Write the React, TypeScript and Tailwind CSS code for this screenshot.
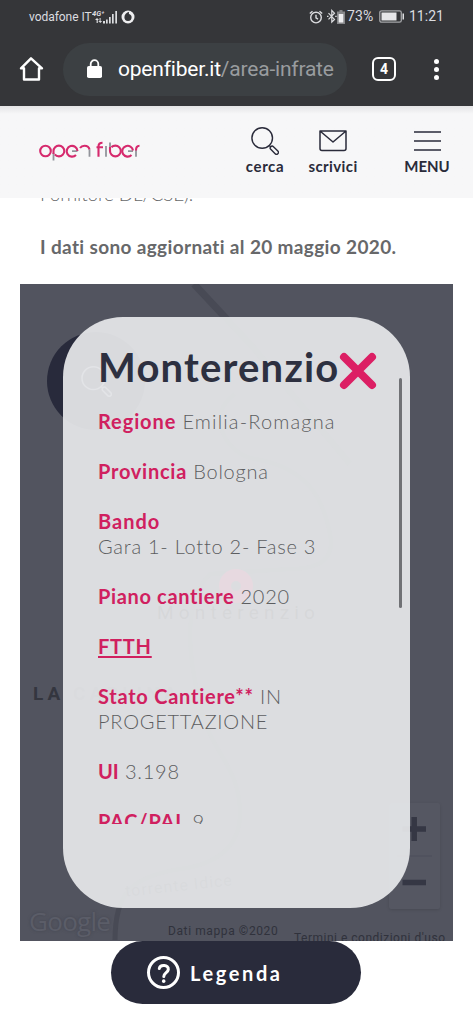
import type { ReactNode } from "react";
import { clsx } from "clsx";

const StatusBar = () => (
  <div className="flex h-[33px] shrink-0 items-center justify-between pl-[29px] pr-[29px] font-['Roboto',sans-serif] text-[#dcdde0]">
    <div className="flex items-center">
      <span className="w-[62px] whitespace-nowrap text-[12px] tracking-[-0.05px]">vodafone IT</span>
      <svg width="27" height="16" viewBox="0 0 27 16" className="ml-px" fill="currentColor">
        <text x="0" y="7" fontSize="7.500" fontWeight="700" fontStyle="italic">4G⁺</text>
        <path d="M5 9l2 2H5.800v3H4.600v-3H3zM8.300 14l-2-2h1.300V9h1v3h1.500z" />
        <path d="M11 12h2v2.500h-2zM14 10.500h1.700v4H14zM17 8h1.700v6.500H17zM20 5h1.700v9.500H20zM23.300 2H25v12.500h-1.700z" />
      </svg>
      <svg width="14" height="14" viewBox="0 0 14 14" className="ml-[2px]">
        <circle cx="7" cy="7" r="6.500" fill="#eeeef0" />
        <path d="M8.200 1.800C5.500 2.300 3.400 4.700 3.400 7.300a3.600 3.600 0 0 0 7.200 0c0-1.700-1-2.900-2.600-3.300-.3-.9-.2-1.600.2-2.200z" fill="#353639" />
      </svg>
    </div>
    <div className="flex items-center">
      <svg width="14" height="14" viewBox="0 0 14 14" fill="none" stroke="currentColor" strokeWidth="1.400" className="-ml-px">
        <circle cx="7" cy="7.600" r="5.300" />
        <path d="M7 4.800v3l2 1.300M.8 3.600l2.700-2.400M13.200 3.600l-2.700-2.400" />
      </svg>
      <svg width="10" height="15" viewBox="0 0 10 15" fill="none" stroke="currentColor" strokeWidth="1.200" className="ml-[4px]">
        <path d="M1.500 4.200l6 6.200L4.800 13V1.500l2.700 2.700-6 6.200" />
        <path d="M0 7.300h1.500M8.200 7.300h1.500" />
      </svg>
      <svg width="8" height="14" viewBox="0 0 8 14">
        <path d="M2.500 0h3v1.500H8V14H0V1.500h2.500z" fill="#87888b" />
        <path d="M1.700 4h4.600v8.500H1.700z" fill="#eeeef0" />
      </svg>
      <span className="ml-[2px] w-[28px] whitespace-nowrap text-[14px] tracking-[0.1px]">73%</span>
      <svg width="26" height="13" viewBox="0 0 26 13" className="ml-[4px]">
        <rect x=".8" y=".8" width="21.500" height="11.400" rx="1.800" fill="none" stroke="#a4a5a8" strokeWidth="1.300" />
        <path d="M2.500 2.500h15v8h-15z" fill="#e6e6e8" />
        <path d="M23.500 3.500H25v6h-1.500z" fill="currentColor" />
      </svg>
      <span className="ml-[4px] w-[35px] whitespace-nowrap text-[14px]">11:21</span>
    </div>
  </div>
);

const BrowserBar = () => (
  <div className="flex h-[73px] shrink-0 items-center pb-px text-white">
    <svg width="26" height="26" viewBox="0 0 26 26" fill="none" stroke="currentColor" strokeWidth="2.400" strokeLinejoin="round" className="ml-[18px]">
      <path d="M13 2.300L3 12.300h3V23.500h15V12.300h3z" />
    </svg>
    <div className="ml-[19px] flex h-[53px] w-[284px] items-center rounded-full bg-[#3c4043] pl-[24px]">
      <svg width="15" height="20" viewBox="0 0 15 20">
        <rect y="7" width="15" height="12" rx="1.800" fill="#fff" />
        <path d="M3.700 8V5a3.800 3.800 0 0 1 7.600 0v3" fill="none" stroke="#fff" strokeWidth="1.800" />
      </svg>
      <div className="ml-[16px] w-[216px] overflow-hidden whitespace-nowrap pt-[2px] font-['Roboto',sans-serif] text-[21px] tracking-[-0.2px]">
        openfiber.it<span className="text-[#999c9f]">/area-infratel</span>
      </div>
    </div>
    <div className="ml-[25px] flex h-[24px] w-[24px] items-center justify-center rounded-[6px] border-[2.500px] border-white font-['Roboto',sans-serif] text-[14px] font-bold">
      4
    </div>
    <div className="ml-[38px] flex flex-col gap-[3px]">
      <span className="h-[5px] w-[5px] rounded-full bg-white" />
      <span className="h-[5px] w-[5px] rounded-full bg-white" />
      <span className="h-[5px] w-[5px] rounded-full bg-white" />
    </div>
  </div>
);

const Logo = () => (
  <svg width="101" height="21" viewBox="0 0 101 21" fill="none" strokeWidth="2.100">
    <g stroke="#92949b" strokeWidth="1.800">
      <path d="M14.500 12v7.500M33 10.200h5.500M50.500 8.500v7.300M67 5v10.800M71 1.500v6M89 10.200h5M97 9v6.800" />
    </g>
    <g stroke="#d62a6d">
      <circle cx="6.500" cy="10" r="5.300" />
      <path d="M14.500 13v-3a5.400 5.400 0 1 1 5.400 5.400c-1.800 0-3.100-.7-4.100-2" />
      <path d="M37 14A5.400 5.400 0 1 1 38.500 10" />
      <path d="M41 7c1-1.500 2.500-2.300 4.500-2.300 2.800 0 4.600 1.400 5 3.800" />
      <path d="M59.500 15.800V5.500c0-2.800 1.300-3.800 4-3.800M57.500 6.300H64" />
      <path d="M71 6v4a5.400 5.400 0 1 0 5.400-5.400c-1.700 0-3 .6-4 1.500" />
      <path d="M92.500 14A5.400 5.400 0 1 1 94 9.500M97 9.500c0-3.300 1-4.800 3.500-4.800" />
    </g>
  </svg>
);

const SearchIcon = ({ className }: { className?: string }) => (
  <svg viewBox="0 0 28 28" fill="none" stroke="currentColor" strokeWidth="1.400" className={className}>
    <circle cx="11.200" cy="11" r="10.300" />
    <path d="M18.300 18.500l1.500 1.500" />
    <rect x="18.300" y="21.300" width="10" height="3.800" rx="1.900" transform="rotate(45 23.300 23.200)" />
  </svg>
);

const NavItem = ({ label, className, children }: { label: string; className: string; children: ReactNode }) => (
  <button className={clsx("flex flex-col items-center", className)}>
    <span className="flex h-[28px] items-center justify-center">{children}</span>
    <span className="mt-px whitespace-nowrap text-[15px] font-bold leading-[20px]">{label}</span>
  </button>
);

const SiteHeader = () => (
  <header className="flex h-[92px] shrink-0 items-start bg-linear-to-b from-[#e4e4e6] to-[#f7f7f8] to-[8px] pt-[21px] text-[#2a2b3a]">
    <div className="ml-[39px] mt-[14px]">
      <Logo />
    </div>
    <NavItem label="cerca" className="ml-[104px] w-[42px] tracking-[0.6px]">
      <SearchIcon className="h-[28px] w-[28px]" />
    </NavItem>
    <NavItem label="scrivici" className="ml-[21px] w-[52px] tracking-[0.4px]">
      <svg width="28" height="22" viewBox="0 0 28 22" fill="none" stroke="currentColor" strokeWidth="1.500" strokeLinejoin="round">
        <path d="M1 1h26v17.500a2 2 0 0 1-2 2H3a2 2 0 0 1-2-2zM1 1l13 11L27 1" />
      </svg>
    </NavItem>
    <NavItem label="MENU" className="ml-[44px] w-[48px]">
      <svg width="27" height="22" viewBox="0 0 27 22" stroke="currentColor" strokeWidth="1.500">
        <path d="M0 2h27M0 11h27M0 20h27" />
      </svg>
    </NavItem>
  </header>
);

const Label = ({ children, className }: { children: ReactNode; className?: string }) => (
  <strong className={clsx("font-bold text-[#d0205f]", className)}>{children}</strong>
);

const MapBackdrop = () => (
  <>
    <svg width="433" height="656" viewBox="0 0 433 656" fill="none" className="absolute inset-0">
      <path d="M174 0L232 62L330 180" stroke="#484a55" strokeWidth="7" />
      <path d="M215 110c-30 20-10 60 20 65 60 10 70 50 75 75s-10 35-40 35l-80 5c-30 30-20 90-10 130 10 50 40 60 40 110 0 30-20 50-60 55-50 8-65 25-65 71" stroke="#484a55" strokeWidth="5" />
      <circle cx="216" cy="302" r="17" fill="#d8205f" />
      <circle cx="216" cy="302" r="5" fill="#52545f" />
    </svg>
    <span className="absolute left-[13px] top-[400px] whitespace-nowrap text-[19px] font-bold leading-[20px] tracking-[4px] text-[#34363f]">LA CARLINA</span>
    <span className="absolute left-[137px] top-[319px] text-[19px] leading-[20px] tracking-[5.200px] text-black">Monterenzio</span>
    <span className="absolute left-[105px] top-[592px] -rotate-6 text-[16px] leading-[20px] tracking-[1px] text-[#24262f]">torrente Idice</span>
    <span className="absolute left-[9px] top-[621px] font-['Open_Sans',sans-serif] text-[26px] font-medium leading-[32px] tracking-[-0.7px] text-[#5b5d68] [text-shadow:0_0_3px_#444651]">Google</span>
    <span className="absolute left-[148px] top-[638px] whitespace-nowrap text-[12px] leading-[18px] tracking-[0.600px] text-[#30323c]">Dati mappa ©2020</span>
    <span className="absolute left-[274px] top-[645px] whitespace-nowrap text-[12px] leading-[18px] tracking-[0.500px] text-[#30323c]">Termini e condizioni d'uso</span>
    <div className="absolute left-[369px] top-[519px] h-[106px] w-[51px] rounded-xs bg-[#555762] shadow-[0_1px_3px_rgba(0,0,0,0.12)]">
      <svg width="51" height="106" viewBox="0 0 51 106" stroke="#353744">
        <path d="M13.500 26h23.500M25.200 14v24M13.500 79.500h23.500" strokeWidth="5.500" />
        <path d="M8 53h35" stroke="#4d4f5a" />
      </svg>
    </div>
    <div className="absolute left-[27px] top-[48px] flex h-[98px] w-[98px] items-center justify-center rounded-full bg-[#282a3b] text-[#a0a1ac]">
      <SearchIcon className="h-[31px] w-[31px]" />
    </div>
  </>
);

const InfoCard = () => (
  <div className="relative ml-[43px] mt-[33px] flex h-[591px] w-[347px] flex-col rounded-[60px] bg-[rgba(232,233,235,0.92)] pl-[35px] text-[#5c5d60]">
    <div className="mt-[25px] flex h-[50px] items-center">
      <h2 className="w-[241px] whitespace-nowrap font-['Lato',sans-serif] text-[40px] font-bold leading-[50px] tracking-[1.200px] text-[#2d3040]">Monterenzio</h2>
      <svg width="38" height="38" viewBox="0 0 38 38" stroke="#dc1f64" strokeWidth="8" strokeLinecap="round" className="mt-[8px]">
        <path d="M5 5l28 28M33 5L5 33" />
      </svg>
    </div>
    <div className="mt-[17px] h-[415px] overflow-hidden whitespace-nowrap font-['Lato',sans-serif] text-[20px] font-light leading-[25px] tracking-[0.750px]">
      <p className="mb-[25px]"><Label className="tracking-[0.900px]">Regione</Label> <span className="tracking-[1.150px]">Emilia-Romagna</span></p>
      <p className="mb-[25px]"><Label>Provincia</Label> Bologna</p>
      <p className="mb-[25px]"><Label className="tracking-[1px]">Bando</Label><br />Gara 1- Lotto 2- Fase 3</p>
      <p className="mb-[25px]"><Label className="tracking-[0.650px]">Piano cantiere</Label> 2020</p>
      <p className="mb-[25px]"><Label className="underline underline-offset-2">FTTH</Label></p>
      <p className="mb-[25px]"><Label>Stato Cantiere**</Label> IN<br />PROGETTAZIONE</p>
      <p className="mb-[25px]"><Label className="tracking-normal">UI</Label> 3.198</p>
      <p><Label>PAC/PAL</Label> 9</p>
    </div>
    <span className="absolute right-[8px] top-[61px] h-[230px] w-[3px] rounded-full bg-[#707175]" />
  </div>
);

const App = () => {
  return (
    <div className="flex h-[1024px] w-[473px] flex-col overflow-hidden bg-white font-['Lato',sans-serif]">
      <div className="flex h-[106px] shrink-0 flex-col bg-[#353639]">
        <StatusBar />
        <BrowserBar />
      </div>
      <SiteHeader />
      <div className="h-[86px] shrink-0 px-[40px] text-[19px] leading-[25px] text-[#67686a]">
        <div className="flex h-[10px] items-end overflow-hidden">
          <p className="mb-[2px] whitespace-nowrap font-light tracking-[-0.150px]">Fornitore DL/CSE).</p>
        </div>
        <p className="mt-[26px] whitespace-nowrap font-bold tracking-[0.350px]">I dati sono aggiornati al 20 maggio 2020.</p>
      </div>
      <section className="relative ml-[20px] flex h-[657px] w-[433px] shrink-0 flex-col overflow-hidden bg-[#52545f] font-['Roboto',sans-serif]">
        <MapBackdrop />
        <InfoCard />
      </section>
      <button className="ml-[111px] flex h-[63px] w-[250px] shrink-0 items-center rounded-full bg-[#292b3b] pl-[36px] text-white">
        <svg width="33" height="33" viewBox="0 0 33 33" fill="none" stroke="currentColor" strokeWidth="3" strokeLinecap="round">
          <circle cx="16.500" cy="16.500" r="15" />
          <path d="M12.300 12.500c1-4.500 9.500-3.800 9 1-.3 3-4.500 3.300-4.500 7" />
          <path d="M16.700 25v.2" strokeWidth="3.500" />
        </svg>
        <span className="ml-[10px] text-[20px] font-bold tracking-[2.600px]">Legenda</span>
      </button>
    </div>
  );
};

export default App;
